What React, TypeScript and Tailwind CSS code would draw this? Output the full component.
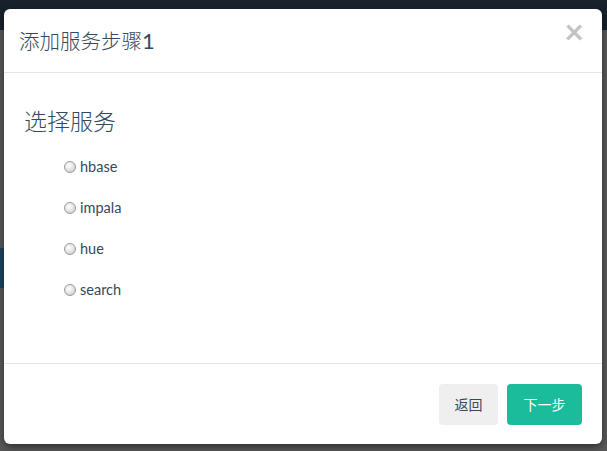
import React from 'react';

const services = ['hbase', 'impala', 'hue', 'search'];

const Radio = () => (
    <span className="inline-block h-[12px] w-[12px] shrink-0 rounded-full border border-[#9a9a9a] bg-[radial-gradient(circle_at_40%_35%,#ffffff_0%,#e6e6e6_45%,#c4c4c4_100%)]" />
);

export default function App() {
    return (
        <div
            className="relative h-[451px] w-[607px] overflow-hidden bg-[#5a5a5a]"
            style={{ fontFamily: 'Lato, "Noto Sans CJK SC", sans-serif' }}
        >
            {/* page behind the backdrop */}
            <div className="h-[30px] bg-[#18212c]" />
            <div className="flex flex-col">
                <div className="mt-[218px] h-[40px] w-[12px] bg-[#1c4866]" />
            </div>

            {/* dialog */}
            <div className="absolute left-[4px] top-[9px] flex h-[435px] w-[598px] flex-col rounded-[6px] bg-white shadow-[0_3px_9px_rgba(0,0,0,0.5)]">
                <div className="flex h-[64px] items-center justify-between border-b border-[#e5e5e5] pl-[15px] pr-[18px]">
                    <h4 className="text-[20.5px] font-light leading-none text-[#34495e]">
                        添加服务步骤<span className="text-[22px] font-normal">1</span>
                    </h4>
                    <button className="-mt-[20px] text-[34px] font-bold leading-none text-[#c4c4c4]">×</button>
                </div>

                <div className="flex-1 border-b border-[#e5e5e5] pl-[20px] pt-[37px]">
                    <h3 className="text-[23px] font-light leading-none text-[#34495e]">选择服务</h3>
                    <div className="mt-[25px] flex flex-col gap-[23px] pl-[40px]">
                        {services.map((s) => (
                            <label key={s} className="flex h-[18px] items-center gap-[4px] text-[14.5px] text-[#34495e]">
                                <Radio />
                                <span>{s}</span>
                            </label>
                        ))}
                    </div>
                </div>

                <div className="flex h-[80px] items-center justify-end gap-[9px] pr-[20px]">
                    <button className="h-[41px] w-[59px] rounded-[4px] bg-[#efefef] text-[14px] text-[#34495e]">返回</button>
                    <button className="h-[41px] w-[75px] rounded-[4px] bg-[#1abc9c] text-[14px] text-white">下一步</button>
                </div>
            </div>
        </div>
    );
}
